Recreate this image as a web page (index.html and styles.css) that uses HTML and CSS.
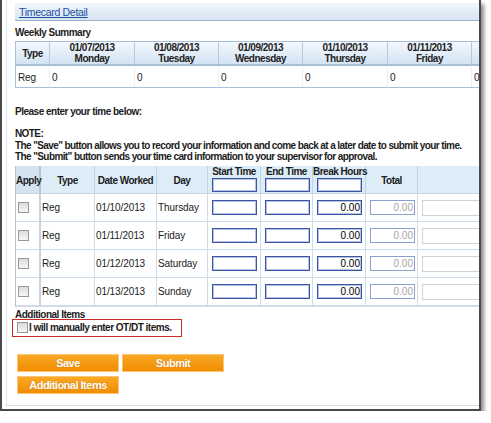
FILE: index.html
```html
<!DOCTYPE html>
<html lang="en">
<head>
    <meta charset="UTF-8">
    <title>Timecard Detail</title>
    <link rel="stylesheet" href="styles.css">
</head>
<body>
    <div class="window">
        <div class="panel">
            <div class="titlebar"><a href="#">Timecard Detail</a></div>

            <!-- Weekly summary -->
            <div class="section-title">Weekly Summary</div>
            <table class="summary">
                <colgroup>
                    <col style="width:34px"><col style="width:85px"><col style="width:84px"><col style="width:84px">
                    <col style="width:85px"><col style="width:84px"><col style="width:84px">
                </colgroup>
                <tr>
                    <th>Type</th>
                    <th>01/07/2013<br>Monday</th>
                    <th>01/08/2013<br>Tuesday</th>
                    <th>01/09/2013<br>Wednesday</th>
                    <th>01/10/2013<br>Thursday</th>
                    <th>01/11/2013<br>Friday</th>
                    <th>01/12/2013<br>Saturday</th>
                </tr>
                <tr>
                    <td>Reg</td><td>0</td><td>0</td><td>0</td><td>0</td><td>0</td><td>0</td>
                </tr>
            </table>

            <div class="prompt">Please enter your time below:</div>
            <div class="note">
                NOTE:<br>
                The "Save" button allows you to record your information and come back at a later date to submit your time.<br>
                The "Submit" button sends your time card information to your supervisor for approval.
            </div>

            <!-- Time entry -->
            <table class="entry">
                <colgroup>
                    <col style="width:25px"><col style="width:54px"><col style="width:62px"><col style="width:51px">
                    <col style="width:53px"><col style="width:52px"><col style="width:53px"><col style="width:52px">
                    <col style="width:90px">
                </colgroup>
                <tr>
                    <th class="apply">Apply</th>
                    <th>Type</th>
                    <th>Date Worked</th>
                    <th>Day</th>
                    <th class="top">Start Time<input type="text" class="time"></th>
                    <th class="top">End Time<input type="text" class="time"></th>
                    <th class="top">Break Hours<input type="text" class="time"></th>
                    <th>Total</th>
                    <th></th>
                </tr>
                <tr>
                    <td class="apply"><input type="checkbox" class="check"></td>
                    <td>Reg</td><td>01/10/2013</td><td>Thursday</td>
                    <td><input type="text" class="time"></td>
                    <td><input type="text" class="time"></td>
                    <td><input type="text" class="time num" value="0.00"></td>
                    <td><input type="text" class="time num total" value="0.00" disabled></td>
                    <td><input type="text" class="comment"></td>
                </tr>
                <tr>
                    <td class="apply"><input type="checkbox" class="check"></td>
                    <td>Reg</td><td>01/11/2013</td><td>Friday</td>
                    <td><input type="text" class="time"></td>
                    <td><input type="text" class="time"></td>
                    <td><input type="text" class="time num" value="0.00"></td>
                    <td><input type="text" class="time num total" value="0.00" disabled></td>
                    <td><input type="text" class="comment"></td>
                </tr>
                <tr>
                    <td class="apply"><input type="checkbox" class="check"></td>
                    <td>Reg</td><td>01/12/2013</td><td>Saturday</td>
                    <td><input type="text" class="time"></td>
                    <td><input type="text" class="time"></td>
                    <td><input type="text" class="time num" value="0.00"></td>
                    <td><input type="text" class="time num total" value="0.00" disabled></td>
                    <td><input type="text" class="comment"></td>
                </tr>
                <tr>
                    <td class="apply"><input type="checkbox" class="check"></td>
                    <td>Reg</td><td>01/13/2013</td><td>Sunday</td>
                    <td><input type="text" class="time"></td>
                    <td><input type="text" class="time"></td>
                    <td><input type="text" class="time num" value="0.00"></td>
                    <td><input type="text" class="time num total" value="0.00" disabled></td>
                    <td><input type="text" class="comment"></td>
                </tr>
            </table>

            <div class="extra-title">Additional Items</div>
            <label class="manual"><input type="checkbox" class="check"> I will manually enter OT/DT items.</label>

            <div class="buttons">
                <button class="btn">Save</button>
                <button class="btn">Submit</button>
                <button class="btn">Additional Items</button>
            </div>
        </div>
    </div>
</body>
</html>
```

FILE: styles.css
```css
body { margin: 0; background: #fff; font-family: "Liberation Sans", Arial, sans-serif; font-size: 10px; letter-spacing: -0.1px; color: #1c1c1c; }
.window { width: 477px; height: 409px; border-left: 2px solid #4a4a4a; border-right: 2px solid #4a4a4a; border-bottom: 2px solid #4a4a4a; box-shadow: 3px 4px 4px rgba(0,0,0,0.45); overflow: hidden; background: #fff; }
.panel { margin-left: 4px; height: 402px; border-left: 1px solid #dde5ef; border-bottom: 1px solid #d3deea; padding: 3px 0 0 8px; }

.titlebar { height: 17px; border-bottom: 1px solid #9fb2c8; background: linear-gradient(#f1f6fc, #d6e4f3); padding-left: 4px; line-height: 18px; }
.titlebar a { color: #1d4f9e; font-size: 10.5px; letter-spacing: -0.3px; }

.section-title { font-weight: bold; letter-spacing: -0.5px; margin-top: 5px; line-height: 13px; }

table { border-spacing: 0; table-layout: fixed; }
th, td { padding: 0; white-space: nowrap; }

.summary { width: 542px; margin-top: 2px; border: 1px solid #a9c0dc; }
.summary th { line-height: 11px; background: linear-gradient(#f3f8fd, #d3e3f3); border-right: 1px solid #b5c9e1; border-bottom: 2px solid #a9bfda; font-weight: bold; letter-spacing: -0.5px; color: #222; }
.summary td { line-height: 19px; padding: 2px 0 0 2px; border-right: 1px solid #eaf0f6; }

.prompt { font-weight: bold; letter-spacing: -0.5px; margin-top: 18px; line-height: 12px; }
.note { font-weight: bold; letter-spacing: -0.6px; margin-top: 10px; line-height: 11.5px; white-space: nowrap; }

.entry { width: 493px; margin-top: 3px; border-left: 1px solid #b9c3ce; border-bottom: 1px solid #d6dce2; }
.entry th { line-height: 25px; padding-top: 2px; background: #dcedf8; border-right: 1px solid #bfd3e6; border-bottom: 1px solid #c3d6e8; font-weight: bold; letter-spacing: -0.5px; }
.entry th.top { vertical-align: top; line-height: 11px; padding: 0 0 1px; }
.entry th.apply { background: #d3e3ef; border-right: 2px solid #b9c7d4; }
.entry td { line-height: 27px; padding-left: 1px; border-right: 1px solid #cddcef; border-bottom: 1px solid #cbdcef; }
.entry td.apply { border-right: 2px solid #c9d1d9; padding-left: 2px; }

.time { box-sizing: border-box; width: 45px; height: 15px; margin: 0 0 0 3px; padding: 0 1px; border: 1px solid #3a55a0; box-shadow: inset 0 0 0 1px #b5c2e4; font: inherit; font-size: 10px; letter-spacing: 0; display: inline-block; vertical-align: middle; }
th .time { display: block; height: 14px; margin: 1px 0 0 4px; }
td .time { margin-left: 3px; }
.num { text-align: right; }
.total { border-color: #8d9fcf; box-shadow: none; color: #a8a8a8; background: #fff; }
.comment { box-sizing: border-box; width: 80px; height: 16px; margin-left: 3px; border: 1px solid #d2d2d2; display: inline-block; vertical-align: middle; }

.check { appearance: none; -webkit-appearance: none; width: 11px; height: 11px; margin: 0; border: 1px solid #979797; background: linear-gradient(#dcdcdc, #f6f6f6); vertical-align: middle; box-sizing: border-box; }

.extra-title { font-weight: bold; letter-spacing: -0.5px; margin-top: 3px; line-height: 10px; }
.manual { display: flex; align-items: center; gap: 1px; margin-left: -3px; margin-top: -1px; width: 164px; height: 16px; border: 1px solid #cc2a2a; padding-left: 4px; font-weight: bold; letter-spacing: -0.5px; white-space: nowrap; }

.buttons { display: grid; grid-template-columns: 102px 102px; gap: 4px 3px; margin: 17px 0 0 2px; }
.btn { height: 18px; padding: 0; border: 1px solid #fbc476; background: linear-gradient(#f9a825, #f08d00); color: #fff; font: inherit; font-size: 11px; font-weight: bold; letter-spacing: -0.5px; text-shadow: 0 0 1px rgba(150,80,0,0.6); }
```
